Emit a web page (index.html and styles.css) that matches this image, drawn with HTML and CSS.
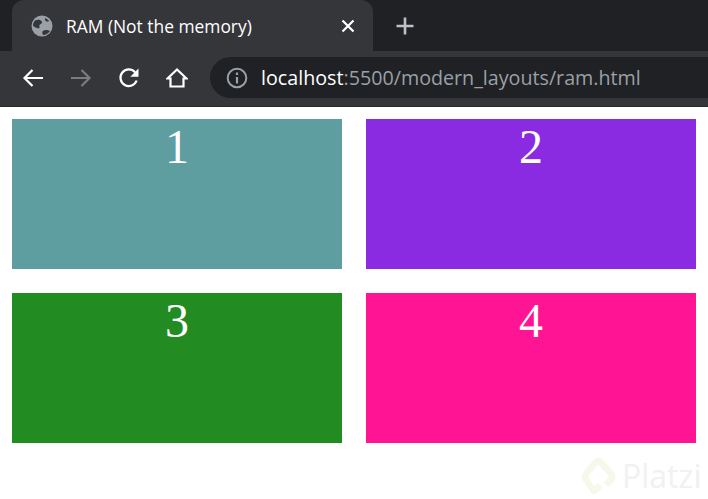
FILE: index.html
```html
<!DOCTYPE html>
<html lang="en">
  <head>
    <meta charset="UTF-8" />
    <title>RAM (Not the memory)</title>
    <link rel="stylesheet" href="styles.css">
  </head>
  <body>
    <div class="browser">
      <div class="tab-strip">
        <div class="tab">
          <svg class="tab-globe" width="22" height="22" viewBox="0 0 22 22">
            <circle cx="11" cy="11" r="10.5" fill="#9aa0a6" />
            <path d="M4 5.500c2.500-1 5-1 6.500.5 1 1.200.6 2.600-.8 3-1.300.4-1.600 1.500-1.200 2.800.3 1.200-.6 2-1.800 1.500C4.800 12.800 3 12 2 10.500 2 8.500 2.800 7 4 5.500z" fill="#35363a" />
            <path d="M12 20c-1-1.800-1-3.500.5-4.500 1.500-.8 3-.6 4.500-.3l2 .8c-1.500 2.400-4 3.800-7 4z" fill="#35363a" />
            <path d="M14 3c1.500.5 3 1.500 4 3-1 .8-2.500.8-3.300 0-.7-.8-1-2-.7-3z" fill="#35363a" />
          </svg>
          <span class="tab-title">RAM (Not the memory)</span>
          <svg class="tab-close" width="14" height="14" viewBox="0 0 14 14">
            <path d="M1.500 1.500l11 11M12.500 1.500l-11 11" stroke="#fff" stroke-width="2.200" fill="none" />
          </svg>
        </div>
        <svg class="new-tab" width="20" height="20" viewBox="0 0 20 20">
          <path d="M10 1.500v17M1.500 10h17" stroke="#bdc1c6" stroke-width="2.600" fill="none" />
        </svg>
      </div>
      <div class="toolbar">
        <div class="nav-icons">
          <svg width="22" height="20" viewBox="0 0 22 20">
            <path d="M21 10H2.500M10.500 2l-8 8 8 8" stroke="#fff" stroke-width="2.200" fill="none" />
          </svg>
          <svg width="22" height="20" viewBox="0 0 22 20">
            <path d="M1 10h18.500M11.500 2l8 8-8 8" stroke="#7b7c7f" stroke-width="2.200" fill="none" />
          </svg>
          <svg width="22" height="22" viewBox="0 0 22 22">
            <path d="M18.600 13.500A8.300 8.300 0 1 1 17 5.200" stroke="#fff" stroke-width="2.200" fill="none" />
            <path d="M20.500 1.500v8.200h-8.200z" fill="#fff" />
          </svg>
          <svg width="22" height="22" viewBox="0 0 22 22">
            <path d="M1.500 11.500L11 2.500l9.500 9H17.500v8h-13v-8z" stroke="#fff" stroke-width="2.200" fill="none" />
          </svg>
        </div>
        <div class="address-bar">
          <svg width="22" height="22" viewBox="0 0 22 22">
            <circle cx="11" cy="11" r="9.300" stroke="#9aa0a6" stroke-width="2" fill="none" />
            <path d="M11 10v6.500M11 5.500v2.500" stroke="#9aa0a6" stroke-width="2.200" fill="none" />
          </svg>
          <span class="url"><span class="url-host">localhost</span>:5500/modern_layouts/ram.html</span>
        </div>
      </div>
    </div>

    <div class="grid">
      <div class="item item-1">1</div>
      <div class="item item-2">2</div>
      <div class="item item-3">3</div>
      <div class="item item-4">4</div>
    </div>

    <div class="watermark">
      <svg width="36" height="40" viewBox="0 0 36 40">
        <path d="M19 29l-4 5c-1 1-2 1-3 0L4.500 23c-1-1.500-1-3 0-4.500L15 6c1.500-1.500 3-1.500 4.500 0l11 12.500c1 1.500 1 3 0 4.500L25 29" stroke="#f6f8ec" stroke-width="6.500" stroke-linejoin="round" fill="none" />
      </svg>
      <span class="watermark-text">Platzi</span>
    </div>
  </body>
</html>
```

FILE: styles.css
```css
* {
  margin: 0;
  padding: 0;
  box-sizing: border-box;
}

body {
  position: relative;
  height: 100vh;
  overflow: hidden;
  background: #fff;
}

.browser {
  height: 107px;
  background: #35363a;
  border-bottom: 1px solid #2a2b2e;
}

.tab-strip {
  display: flex;
  align-items: center;
  height: 51px;
  padding-left: 12px;
  background: #202124;
}

.tab {
  display: flex;
  align-items: center;
  width: 361px;
  height: 51px;
  padding: 0 18px 0 19px;
  background: #35363a;
  border-radius: 12px 12px 0 0;
}

.tab-title {
  flex-grow: 1;
  margin-left: 13px;
  color: #fff;
  font-family: "Open Sans", sans-serif;
  font-size: 17.400px;
}

.new-tab {
  margin-left: 22px;
}

.toolbar {
  display: flex;
  align-items: center;
  height: 55px;
  padding: 6px 0 8px;
}

.nav-icons {
  display: flex;
  align-items: center;
  gap: 26px;
  width: 210px;
  padding-left: 22px;
}

.address-bar {
  display: flex;
  align-items: center;
  flex-grow: 1;
  gap: 13px;
  height: 41px;
  padding-left: 16px;
  background: #202124;
  border-radius: 21px 0 0 21px;
}

.url {
  color: #9aa0a6;
  font-family: "Open Sans", sans-serif;
  font-size: 19.700px;
}

.url-host {
  color: #fff;
}

.grid {
  display: grid;
  grid-template-columns: 330px 330px;
  grid-auto-rows: 150px;
  gap: 24px;
  padding: 12px;
}

.item {
  color: #fff;
  font-family: "Liberation Serif", serif;
  font-size: 48px;
  text-align: center;
}

.item-1 {
  background: cadetblue;
}

.item-2 {
  background: blueviolet;
}

.item-3 {
  background: forestgreen;
}

.item-4 {
  background: deeppink;
}

.watermark {
  position: absolute;
  left: 581px;
  top: 454px;
  display: flex;
  align-items: center;
  gap: 5px;
}

.watermark-text {
  color: #f1f1f1;
  font-family: "Open Sans", sans-serif;
  font-size: 32px;
}
```
